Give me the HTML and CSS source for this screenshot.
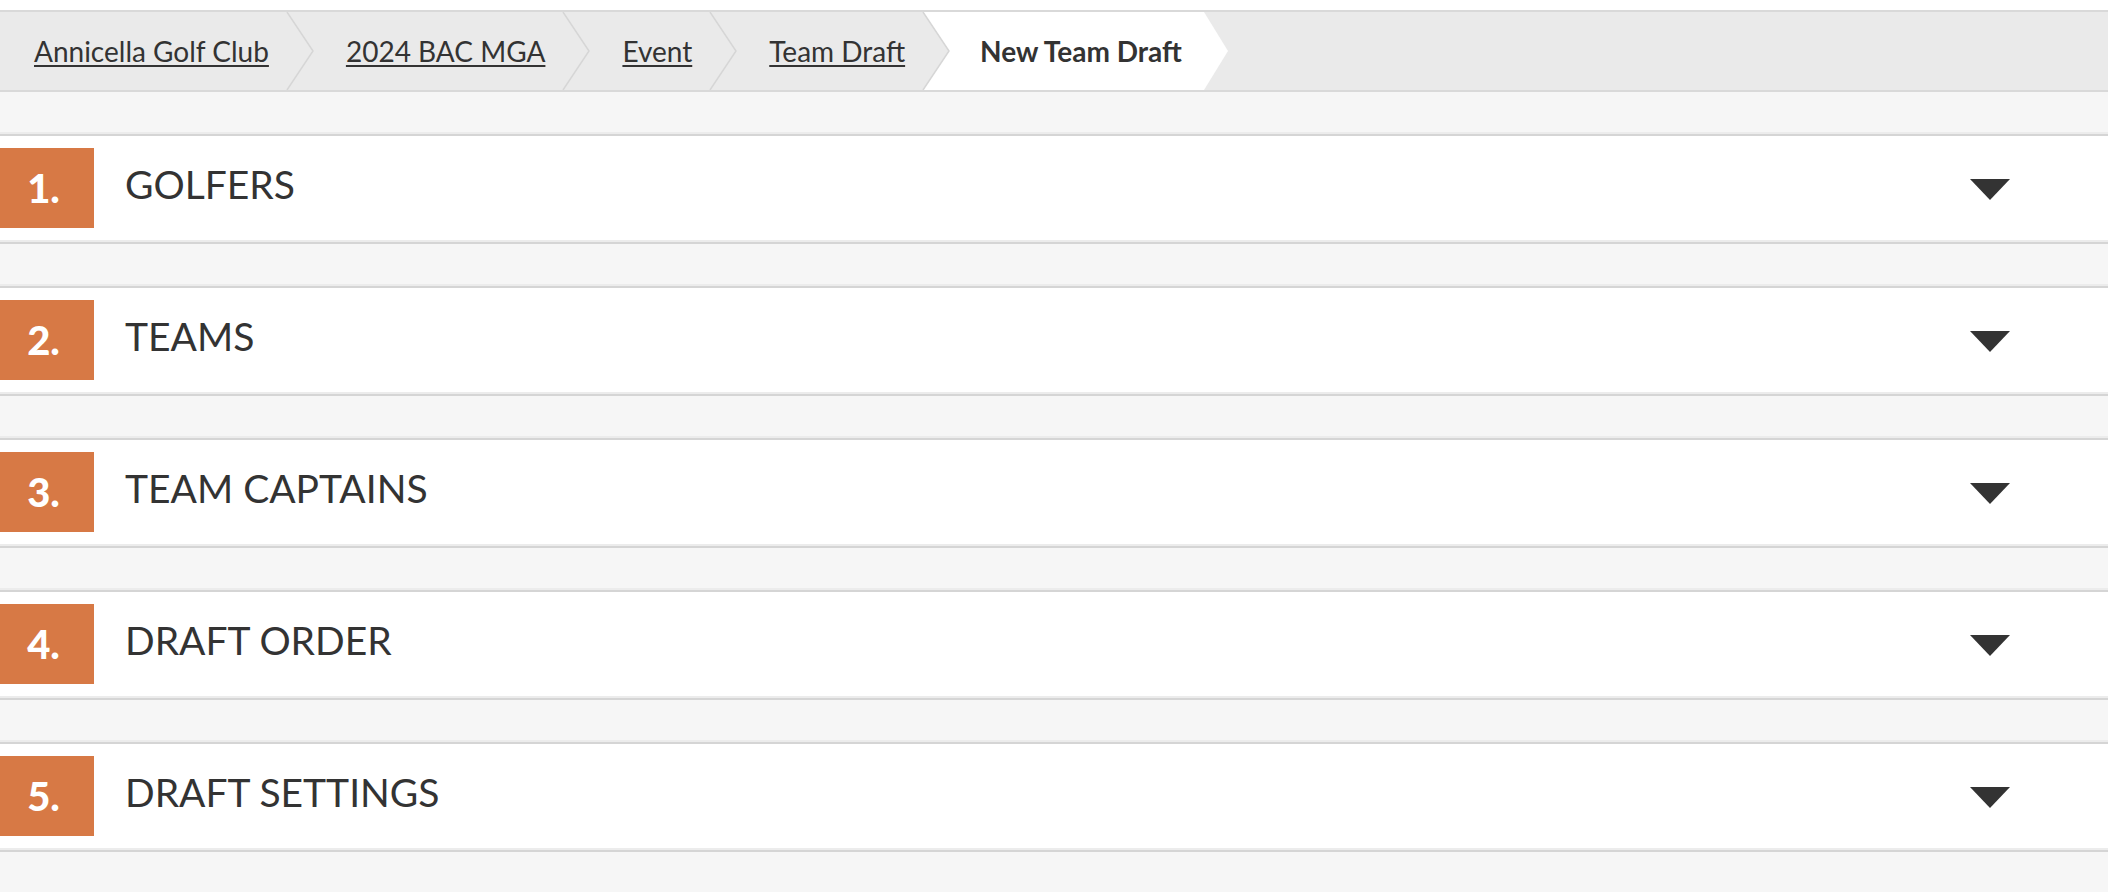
FILE: index.html
```html
<!DOCTYPE html>
<html lang="en">
<head>
<meta charset="utf-8">
<title>New Team Draft</title>
<link rel="stylesheet" href="styles.css">
</head>
<body>
<header class="top">
  <nav class="crumbs">
    <a class="crumb first" href="#">Annicella Golf Club</a>
    <svg class="sep" viewBox="0 0 28 78" width="28" height="78"><polyline points="1,0 27,39 1,78" /></svg>
    <a class="crumb" href="#">2024 BAC MGA</a>
    <svg class="sep" viewBox="0 0 28 78" width="28" height="78"><polyline points="1,0 27,39 1,78" /></svg>
    <a class="crumb" href="#">Event</a>
    <svg class="sep" viewBox="0 0 28 78" width="28" height="78"><polyline points="1,0 27,39 1,78" /></svg>
    <a class="crumb" href="#">Team Draft</a>
    <svg class="sep sep-active" viewBox="0 0 28 78" width="28" height="78"><polygon class="fill" points="1,0 28,0 28,78 1,78 27,39" /><polyline points="1,0 27,39 1,78" /></svg>
    <span class="crumb current">New Team Draft</span>
    <svg class="tip" viewBox="0 0 24 78" width="24" height="78"><polygon points="0,0 24,39 0,78" /></svg>
  </nav>
</header>
<main class="steps">
  <section class="step">
    <div class="num">1.</div>
    <h2 class="title">GOLFERS</h2>
    <span class="caret"></span>
  </section>
  <section class="step">
    <div class="num">2.</div>
    <h2 class="title">TEAMS</h2>
    <span class="caret"></span>
  </section>
  <section class="step">
    <div class="num">3.</div>
    <h2 class="title">TEAM CAPTAINS</h2>
    <span class="caret"></span>
  </section>
  <section class="step">
    <div class="num">4.</div>
    <h2 class="title">DRAFT ORDER</h2>
    <span class="caret"></span>
  </section>
  <section class="step">
    <div class="num">5.</div>
    <h2 class="title">DRAFT SETTINGS</h2>
    <span class="caret"></span>
  </section>
</main>
</body>
</html>
```

FILE: styles.css
```css
html, body {
  margin: 0;
  padding: 0;
}
body {
  background: #f6f6f6;
  font-family: "Lato", "Open Sans", "Liberation Sans", sans-serif;
  color: #333333;
  height: 892px;
  overflow: hidden;
}
.top {
  background: #ffffff;
  padding-top: 10px;
}
.crumbs {
  display: flex;
  align-items: center;
  height: 78px;
  background: #eaeaea;
  border-top: 2px solid #d9d9d9;
  border-bottom: 2px solid #d9d9d9;
}
.crumb {
  display: flex;
  align-items: center;
  height: 78px;
  padding: 0 17px 0 32px;
  font-size: 28px;
  color: #333333;
  text-decoration: underline;
  text-decoration-thickness: 1.5px;
  text-underline-offset: 3px;
  white-space: nowrap;
}
.crumb.first {
  padding-left: 34px;
}
.crumb.current {
  background: #ffffff;
  text-decoration: none;
  font-weight: 700;
  padding: 0 22px 0 30px;
}
.sep {
  display: block;
  flex: none;
}
.sep polyline {
  fill: none;
  stroke: #d6d6d6;
  stroke-width: 1.5;
}
.sep .fill {
  fill: #ffffff;
}
.tip {
  display: block;
  flex: none;
}
.tip polygon {
  fill: #ffffff;
}
.steps {
  display: flex;
  flex-direction: column;
}
.step {
  display: flex;
  align-items: center;
  margin-top: 42px;
  height: 106px;
  background: #ffffff;
  border-top: 2px solid #d5d5d5;
  border-bottom: 2px solid #d5d5d5;
  box-shadow: 0 -2px 0 #ececec, inset 0 -2px 0 #ececec;
}
.num {
  width: 87px;
  height: 80px;
  padding-right: 7px;
  margin-top: -2px;
  background: #d77945;
  color: #ffffff;
  font-weight: 900;
  font-size: 40px;
  display: flex;
  align-items: center;
  justify-content: center;
}
.title {
  flex: 1;
  margin: 0 0 10px 31px;
  font-size: 39px;
  font-weight: 400;
  color: #333333;
  letter-spacing: 0;
}
.caret {
  width: 0;
  height: 0;
  border-left: 20px solid transparent;
  border-right: 20px solid transparent;
  border-top: 21px solid #333333;
  margin-right: 98px;
}
```
